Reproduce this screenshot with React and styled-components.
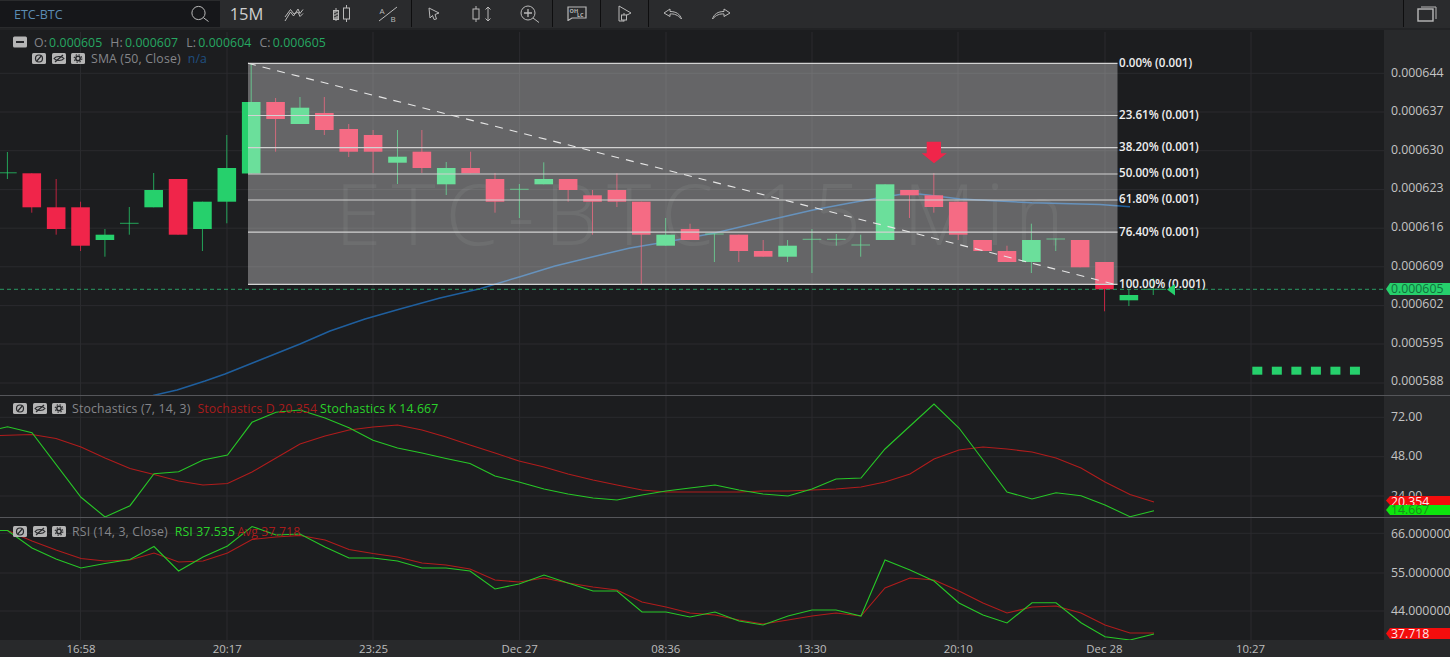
import React from "react";
import styled, { createGlobalStyle } from "styled-components";

const Global = createGlobalStyle`
  html, body { margin: 0; padding: 0; background: #1c1d1f; }
  body { font-family: "Open Sans", "Noto Sans", sans-serif; overflow: hidden; }
  #root { width: 1450px; height: 657px; }
`;

const Page = styled.div`
  width: 1450px; height: 657px; display: flex; flex-direction: column; background: #1c1d1f; overflow: hidden;
`;
const Toolbar = styled.div`
  height: 27px; flex: none; display: flex; align-items: stretch; background: #2a2b2d; border-bottom: 2px solid #222325; padding-bottom: 1px;
`;
const Search = styled.div`
  width: 220px; flex: none; margin-top: 1px; background: #16171a; display: flex; align-items: center; justify-content: space-between; padding: 0 10px 0 14px; box-sizing: border-box;
`;
const Symbol = styled.span`
  color: #5c8db5; font-size: 12.5px;
`;
const Interval = styled.div`
  width: 50px; flex: none; display: flex; align-items: center; justify-content: center; color: #cfcfcf; font-size: 16.5px; padding-left: 3px; box-sizing: border-box;
`;
const Tool = styled.div`
  width: ${p => p.$w}px; flex: none; display: flex; align-items: center; justify-content: center;
`;
const Sep = styled.div`
  width: 1px; flex: none; background: #0e0e0f;
`;
const Spacer = styled.div`
  flex: 1;
`;
const Pane = styled.div`
  height: ${p => p.$h}px; flex: none; display: flex; border-bottom: ${p => p.$line ? "1px solid #55565a" : "none"};
  box-sizing: content-box;
`;
const Plot = styled.div`
  position: relative; width: 1384px; flex: none; overflow: hidden;
`;
const ChartSvg = styled.svg`
  display: block; width: 1384px; height: 100%;
`;
const Axis = styled.div`
  position: relative; flex: 1; background: #28292b; overflow: hidden; display: flex; flex-direction: column;
  gap: ${p => p.$gap}px; padding: ${p => p.$top}px 0 0 7px; box-sizing: border-box;
`;
const AxisLabel = styled.div`
  height: 14px; flex: none; line-height: 14px; font-size: 12.3px; color: #c4c4c4; white-space: nowrap;
`;
const Tag = styled.div`
  position: absolute; left: 2px; right: 0; top: ${p => p.$top}px; height: ${p => p.$h}px; line-height: ${p => p.$lh || p.$h}px;
  background: ${p => p.$bg}; color: ${p => p.$fg}; font-size: 12.3px; padding-left: 5px;
  clip-path: polygon(4px 0, 100% 0, 100% 100%, 4px 100%, 0 50%);
`;
const Legend = styled.div`
  position: absolute; left: ${p => p.$left}px; top: ${p => p.$top}px; display: flex; align-items: center; height: 14px; font-size: 12.3px; white-space: nowrap;
`;
const IconRow = styled.div`
  display: flex; gap: 5.5px; margin-right: 6px; margin-top: 1px;
`;
const Chip = styled.svg`
  display: block; width: 14px; height: ${p => p.$h || 11}px; margin-right: ${p => p.$mr || 0}px;
`;
const Muted = styled.span`
  color: #85868a; margin-right: ${p => p.$mr || 0}px; letter-spacing: .15px;
`;
const Value = styled.span`
  color: ${p => p.$c}; margin-right: ${p => p.$mr || 0}px; margin-left: ${p => p.$ml || 0}px; letter-spacing: .1px;
`;
const TimeAxis = styled.div`
  flex: 1; display: flex; background: #28292b; padding-left: 8px;
`;
const TimeLabel = styled.div`
  width: 146.2px; flex: none; text-align: center; line-height: 17px; font-size: 11.4px; color: #bdbdbd;
`;
const FibText = styled.text`
  fill: #efefef; font-size: 11.6px; font-weight: 600; font-family: "Open Sans", sans-serif;
`;
const Watermark = styled.text`
  fill: rgba(255,255,255,.06); font-size: 84px; font-weight: 300; letter-spacing: 10px; font-family: "Open Sans", sans-serif;
`;

const UP = "#26d06c", DN = "#f0254a";
const X = i => 7.4 + 24.38 * i;
// [index, colour, bodyTop, bodyBottom, wickTop, wickBottom]
const candles = [
  [0,"u",172.3,173.3,152,179],[1,"d",173.3,207.3,173.3,212.7],[2,"d",207.3,229,179,234.7],[3,"d",207.3,245.7,201.7,251],
  [4,"u",234.7,240,229,256.7],[5,"u",222.8,223.8,207,234.7],[6,"u",190,207.3,173,207.3],[7,"d",179,234.7,179,234.7],
  [8,"u",201.7,229,201.7,251],[9,"u",168,201.7,135,223.3],[10,"u",102,173.5,63,173.5],[11,"d",102,119,98,151.7],
  [12,"u",107.7,124,97,124],[13,"d",113,130,97,135],[14,"d",129,151.7,124,157],[15,"d",135,151.7,130,173],
  [16,"u",156.7,162.7,130,184],[17,"d",151.7,168,130,173],[18,"u",168,184.3,162,195],[19,"d",168,173.3,151.7,173.3],
  [20,"d",179,201.7,173,212.7],[21,"u",188.8,189.8,184,218],[22,"u",179,184.3,162.3,184.3],[23,"d",179,190,179,201.7],
  [24,"d",195.3,201.7,190,234.7],[25,"d",190,201.7,173.3,207],[26,"d",201.7,234.7,201.7,284],[27,"u",234.7,245.7,218,245.7],
  [28,"d",229,240,223.7,240],[29,"u",233.5,234.5,233.5,262],[30,"d",234.7,251,234.7,262],[31,"d",251,256.7,240,256.7],
  [32,"u",245.7,256.7,240,262],[33,"u",238.8,239.8,229,273],[34,"u",238.8,239.8,234,245.7],[35,"u",244.5,245.5,234.7,256.7],
  [36,"u",184.3,240,184.3,240],[37,"d",190,195.3,190,218],[38,"d",195.3,207,173,212.7],[39,"d",201.7,234.7,201.7,240],
  [40,"d",240,251,240,251],[41,"d",251,262,245.7,262],[42,"u",240,262,223.7,273],[43,"u",238.5,239.5,238.5,251],
  [44,"d",240,267.3,240,267.3],[45,"d",262,289.3,262,311.3],[46,"u",295,300.3,289.3,306],[47,"u",288.8,289.8,278.3,295],
];
const fibs = [[63.3,"0.00% (0.001)"],[115.5,"23.61% (0.001)"],[147.6,"38.20% (0.001)"],[174,"50.00% (0.001)"],[200,"61.80% (0.001)"],[232.2,"76.40% (0.001)"],[284.4,"100.00% (0.001)"]];
const vGrid = [80.5,227,373,519.6,666,812,958,1105,1251];
const sma = "153,395.5 177,390 205,381 225,374 255,362 300,344 330,331 365,319 400,309 440,298 480,288.7 520,276.7 555,266 593,256.7 630,248 667,241.7 715,233 765,221 813,210 850,203 885,196.7 910,193 934,195.7 960,199 1032,202.7 1100,204.5 1130,206.7";
const stochK = "0,428.5 7.5,426.7 32,432.7 81,497.3 105,517 130,505.7 154,473.7 178.6,471.7 203,460 227.5,455 252,422.3 276,412.3 300,410 325,418 349,427.7 373,440.3 397.5,448 422,453 446,458.5 470,463.5 495,476 519,482 544,489 568,494 593,498 617,500 642,495 666,491 690,488 715,485 739,490 763,494 788,496 812,489 836,479 861,478 885,449 910,426 934,404 959,428 983,460 1007,492 1032,499 1056,492.7 1081,495.7 1105,505 1130,516.7 1154,510.7";
const stochD = "0,435.5 32,434.5 56,438.5 81,447 105,458 130,468.5 154,474.5 178.6,481 203,485 227.5,483.5 252,472 276,458 300,444 325,436 349,430 373,427 397.5,425 422,430 446,437 470,445 495,453 519,461 544,467 568,474 593,480 617,485 642,490 666,492 690,492 715,492 739,492 763,491 788,491 812,490 836,489 861,487 885,482 910,474 934,459 959,450 983,447 1007,449 1032,452 1056,458 1081,468 1105,482 1130,494.5 1154,502";
const rsiG = "0,530.5 7.5,530.5 32,548 56,559 81,568 105,563.5 130,559.5 154,546.5 178.6,571 203,557 227.5,546 252,526.5 276,535 300,534 325,547 349,558 373,558 397.5,561 422,568 446,568 470,571 495,589 519,584 544,575 568,583 593,591 617,591 642,612 666,612 690,617 715,612 739,621 763,625 788,616 812,610 836,610 861,616 885,560 910,570 934,581 959,603 983,615 1007,623 1032,602.7 1056,602.7 1081,622.7 1105,636.7 1130,640 1154,634";
const rsiR = "0,530.5 7.5,530.5 32,541 56,550 81,558.5 105,561 130,560 154,553 178.6,562 203,561 227.5,553 252,539.5 276,537 300,535.5 325,540 349,549.5 373,553.5 397.5,557 422,563 446,565 470,569 495,580 519,582 544,578 568,583 593,587 617,590 642,602 666,607 690,613 715,615 739,620 763,624 788,620 812,616 836,613 861,616 885,588 910,578 934,580 959,591 983,603 1007,613 1032,607 1056,606 1081,613 1105,625 1130,633 1154,633";

const Ico = ({ w, h, children }) => (
  <svg width={w} height={h} viewBox={`0 0 ${w} ${h}`} fill="none" stroke="#b9b9b9" strokeWidth="1">{children}</svg>
);

const GridLines = ({ ys, y0, y1 }) => (
  <g stroke="#2a2b2e" strokeWidth="1">
    {ys.map(y => <line key={y} x1="0" x2="1384" y1={y} y2={y} />)}
    {vGrid.map(x => <line key={x} x1={x} x2={x} y1={y0} y2={y1} />)}
  </g>
);

const BanChip = () => (
  <Chip viewBox="0 0 14 11"><rect width="14" height="11" rx="1.5" fill="#b5b5b5"/><circle cx="7" cy="5.5" r="3.5" fill="none" stroke="#26272a" strokeWidth="1.2"/><line x1="4.8" y1="8" x2="9.2" y2="3" stroke="#26272a" strokeWidth="1.2"/></Chip>
);
const EyeChip = () => (
  <Chip viewBox="0 0 14 11"><rect width="14" height="11" rx="1.5" fill="#b5b5b5"/><path d="M2 5.5C4 2.8 10 2.8 12 5.5C10 8.2 4 8.2 2 5.5Z" fill="none" stroke="#26272a" strokeWidth="1.1"/><line x1="3" y1="9" x2="11" y2="2" stroke="#26272a" strokeWidth="1.2"/></Chip>
);
const GearChip = () => (
  <Chip viewBox="0 0 14 11"><rect width="14" height="11" rx="1.5" fill="#b5b5b5"/><circle cx="7" cy="5.5" r="2.2" fill="none" stroke="#26272a" strokeWidth="1.5"/><circle cx="7" cy="5.5" r="3.8" fill="none" stroke="#26272a" strokeWidth="1.1" strokeDasharray="1.4 1.6"/></Chip>
);
const Chips = () => <IconRow><BanChip/><EyeChip/><GearChip/></IconRow>;

const MainChart = () => (
  <ChartSvg viewBox="0 30 1384 365">
    <GridLines ys={[73.3,112,150.7,189.6,228.2,266.8,305.6,344,383]} y0={32} y1={395} />
    <Watermark x="335" y="245">ETC-BTC 15 Min</Watermark>
    <polyline points={sma} fill="none" stroke="#1f5f9e" strokeWidth="1.5" strokeLinejoin="round" />
    {candles.map(([i, c, t, b, wt, wb]) => {
      const col = c === "u" ? UP : DN;
      const cross = b - t <= 1;
      return (
        <g key={i}>
          <line x1={X(i)} x2={X(i)} y1={wt} y2={wb} stroke={col} strokeWidth="1" opacity=".75" />
          {cross
            ? <line x1={X(i)-9.3} x2={X(i)+9.3} y1={t+.5} y2={t+.5} stroke={col} strokeWidth="1" opacity=".75" />
            : <rect x={X(i)-9.3} y={t} width="18.6" height={b-t} fill={col} />}
        </g>
      );
    })}
    <rect x="248" y="63.3" width="869.5" height="221.2" fill="#ffffff" fillOpacity=".32" />
    <g stroke="#d2d2d2" strokeWidth="1.2">
      {fibs.map(([y]) => <line key={y} x1="248" x2="1117.5" y1={y} y2={y} />)}
    </g>
    <path d="M926.7 141.7H941V153.3H946.7L934 163.3L921.7 153.3H926.7Z" fill={DN} />
    <line x1="248" y1="63.3" x2="1117.5" y2="285" stroke="#e6e6e6" strokeWidth="1.1" strokeDasharray="8 7" />
    {fibs.map(([y, t]) => <FibText key={t} x="1119" y={y + 3.4}>{t}</FibText>)}
    <line x1="0" x2="1384" y1="289.3" y2="289.3" stroke="#2a9a63" strokeWidth="1" strokeDasharray="4 3" />
    <path d="M1167 289.5L1175 284V295.5Z" fill={UP} />
    {[0,1,2,3,4,5].map(i => <rect key={i} x={1252.3 + i * 19.53} y="366.7" width="10" height="8" fill={UP} />)}
  </ChartSvg>
);

const StochChart = () => (
  <ChartSvg viewBox="0 396 1384 121">
    <GridLines ys={[417.3,456.7,496]} y0={396} y1={517} />
    <polyline points={stochD} fill="none" stroke="#b01c1c" strokeWidth="1.1" />
    <polyline points={stochK} fill="none" stroke="#27c727" strokeWidth="1.1" />
  </ChartSvg>
);
const RsiChart = () => (
  <ChartSvg viewBox="0 518 1384 122">
    <GridLines ys={[533.3,573,611]} y0={518} y1={640} />
    <polyline points={rsiR} fill="none" stroke="#b01c1c" strokeWidth="1.1" />
    <polyline points={rsiG} fill="none" stroke="#27c727" strokeWidth="1.1" />
  </ChartSvg>
);

export default function App() {
  return (
    <Page>
      <Global />
      <Toolbar>
        <Search>
          <Symbol>ETC-BTC</Symbol>
          <Ico w="20" h="18"><circle cx="8.5" cy="8" r="6.6"/><line x1="13.3" y1="12.6" x2="18.5" y2="16.5"/></Ico>
        </Search>
        <Interval>15M</Interval>
        <Tool $w={48}><Ico w="20" h="16"><path d="M1 15L6.5 6L9.5 10L14 3L16 7.5L19 3.5"/><path d="M1 11L6.5 3.5L10 8L14 6L16 10.5L19 7.5"/></Ico></Tool>
        <Tool $w={46}><Ico w="20" h="18"><line x1="5" y1="3" x2="5" y2="16"/><rect x="2.5" y="5.5" width="5" height="9" fill="#8f8f8f"/><path d="M3 9L7 7M3 12L7 10" stroke="#2a2b2d"/><line x1="15.5" y1="0" x2="15.5" y2="17"/><rect x="12.5" y="3" width="6" height="11" fill="#2a2b2d"/></Ico></Tool>
        <Tool $w={47}><Ico w="20" h="16"><line x1="1" y1="15" x2="19" y2="1"/><text x="1.5" y="8" fontSize="8" fill="#b9b9b9" stroke="none" fontFamily="Open Sans">A</text><text x="12.5" y="15.5" fontSize="8" fill="#b9b9b9" stroke="none" fontFamily="Open Sans">B</text></Ico></Tool>
        <Sep />
        <Tool $w={44}><Ico w="12" h="13"><path d="M1 1L11 6L7 7.5L8.5 12L6 12.5L4.5 8.5L2 11Z"/></Ico></Tool>
        <Tool $w={52}><Ico w="20" h="18"><line x1="4" y1="1" x2="4" y2="17"/><rect x="1" y="4" width="6" height="10" fill="#2a2b2d"/><path d="M16 2V16M13.5 4.5L16 2L18.5 4.5M13.5 13.5L16 16L18.5 13.5"/></Ico></Tool>
        <Tool $w={44}><Ico w="20" h="18"><circle cx="8" cy="8" r="7"/><path d="M4 8H12M8 4V12" strokeWidth="1.3"/><line x1="13" y1="13" x2="19" y2="17.5"/></Ico></Tool>
        <Sep />
        <Tool $w={47}><Ico w="20" h="15"><path d="M1 1H19V12H5L1 14.5Z" strokeWidth="1.2"/><text x="2.5" y="6.5" fontSize="5.5" fontWeight="700" fill="#b9b9b9" stroke="none" fontFamily="Open Sans">OH</text><text x="10" y="11" fontSize="5.5" fontWeight="700" fill="#b9b9b9" stroke="none" fontFamily="Open Sans">LC</text></Ico></Tool>
        <Sep />
        <Tool $w={47}><Ico w="14" h="17"><path d="M1 1L13 8L7 11M1 1V16H6"/><line x1="6" y1="8" x2="6" y2="16.5"/><rect x="3.5" y="10" width="5" height="5" fill="#2a2b2d"/></Ico></Tool>
        <Sep />
        <Tool $w={48}><Ico w="20" h="12"><path d="M7 1L1 5L7 8.5V6C11 5.5 15 7 18.5 11C17 6 13 3.5 7 3.5Z"/></Ico></Tool>
        <Tool $w={48}><Ico w="20" h="12"><path d="M13 1L19 5L13 8.5V6C9 5.5 5 7 1.5 11C3 6 7 3.5 13 3.5Z"/></Ico></Tool>
        <Spacer />
        <Sep />
        <Tool $w={46}><Ico w="20" h="16"><rect x="1" y="3" width="15" height="12" strokeWidth="1.4"/><path d="M4 1H19V13"/></Ico></Tool>
      </Toolbar>

      <Pane $h={365} $line>
        <Plot>
          <MainChart />
          <Legend $left={13} $top={5}>
            <Chip viewBox="0 0 14 11" $h={12} $mr={7}><rect width="14" height="11" rx="1.5" fill="#b5b5b5"/><rect x="3" y="4.5" width="8" height="2" fill="#26272a"/></Chip>
            <Muted $mr={2}>O:</Muted><Value $c="#26a862" $mr={8}>0.000605</Value>
            <Muted $mr={2}>H:</Muted><Value $c="#26a862" $mr={8}>0.000607</Value>
            <Muted $mr={2}>L:</Muted><Value $c="#26a862" $mr={8}>0.000604</Value>
            <Muted $mr={2}>C:</Muted><Value $c="#26a862">0.000605</Value>
          </Legend>
          <Legend $left={32} $top={21}>
            <Chips /><Muted $mr={7}>SMA (50, Close)</Muted><Value $c="#1f4f80">n/a</Value>
          </Legend>
        </Plot>
        <Axis $top={35.6} $gap={24.6}>
          {["0.000644","0.000637","0.000630","0.000623","0.000616","0.000609","0.000602","0.000595","0.000588"].map(v => <AxisLabel key={v}>{v}</AxisLabel>)}
          <Tag $top={253} $h={12} $bg="#26d06c" $fg="#12703c">0.000605</Tag>
        </Axis>
      </Pane>

      <Pane $h={121} $line>
        <Plot>
          <StochChart />
          <Legend $left={13} $top={5}>
            <Chips /><Muted $mr={7}>Stochastics (7, 14, 3)</Muted>
            <Value $c="#a81c1c">Stochastics D 20.354</Value>
            <Value $c="#2bd32b" $ml={3}>Stochastics K 14.667</Value>
          </Legend>
        </Plot>
        <Axis $top={13.5} $gap={25.5}>
          {["72.00","48.00","24.00"].map(v => <AxisLabel key={v}>{v}</AxisLabel>)}
          <Tag $top={100} $h={9} $lh={11} $bg="#f40d0d" $fg="#ffe9e9">20.354</Tag>
          <Tag $top={109} $h={10} $bg="#0ee60e" $fg="#1b8f1b">14.667</Tag>
        </Axis>
      </Pane>

      <Pane $h={122}>
        <Plot>
          <RsiChart />
          <Legend $left={13} $top={6}>
            <Chips /><Muted $mr={7}>RSI (14, 3, Close)</Muted>
            <Value $c="#2bd32b" $mr={2}>RSI 37.535</Value>
            <Value $c="#a81c1c">Avg 37.718</Value>
          </Legend>
        </Plot>
        <Axis $top={9} $gap={24.5}>
          {["66.000000","55.000000","44.000000"].map(v => <AxisLabel key={v}>{v}</AxisLabel>)}
          <Tag $top={110} $h={11} $bg="#f40d0d" $fg="#ffe9e9">37.718</Tag>
        </Axis>
      </Pane>

      <TimeAxis>
        {["16:58","20:17","23:25","Dec 27","08:36","13:30","20:10","Dec 28","10:27"].map(t => <TimeLabel key={t}>{t}</TimeLabel>)}
      </TimeAxis>
    </Page>
  );
}
